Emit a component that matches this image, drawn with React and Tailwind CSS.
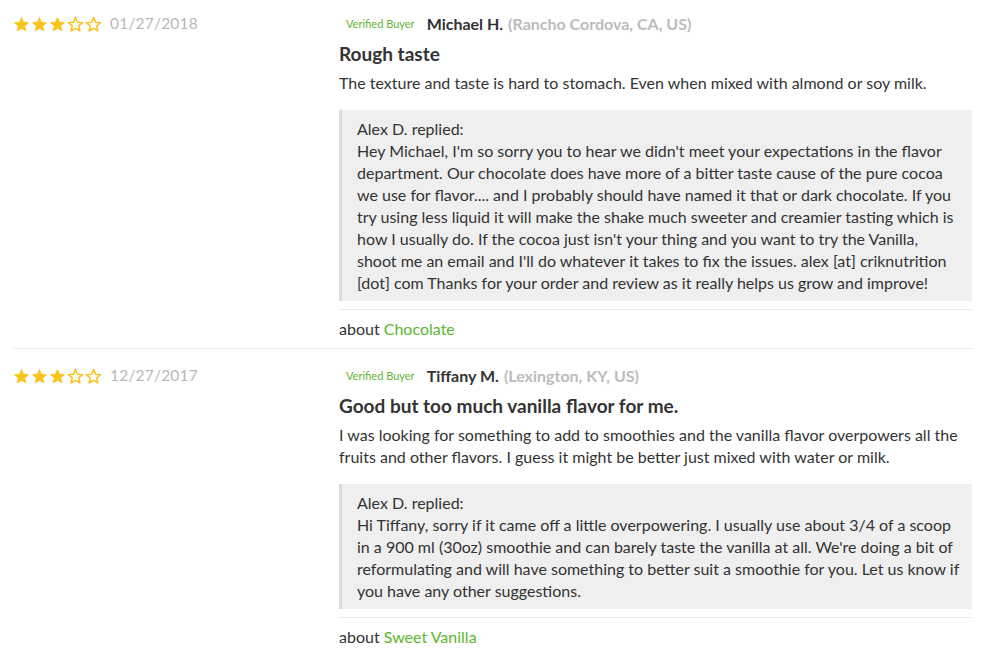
const reviews = [
  {
    rating: 3,
    date: '01/27/2018',
    name: 'Michael H.',
    location: '(Rancho Cordova, CA, US)',
    title: 'Rough taste',
    body: 'The texture and taste is hard to stomach. Even when mixed with almond or soy milk.',
    replier: 'Alex D.',
    reply:
      "Hey Michael, I'm so sorry you to hear we didn't meet your expectations in the flavor department. Our chocolate does have more of a bitter taste cause of the pure cocoa we use for flavor.... and I probably should have named it that or dark chocolate. If you try using less liquid it will make the shake much sweeter and creamier tasting which is how I usually do. If the cocoa just isn't your thing and you want to try the Vanilla, shoot me an email and I'll do whatever it takes to fix the issues. alex [at] criknutrition [dot] com Thanks for your order and review as it really helps us grow and improve!",
    product: 'Chocolate',
  },
  {
    rating: 3,
    date: '12/27/2017',
    name: 'Tiffany M.',
    location: '(Lexington, KY, US)',
    title: 'Good but too much vanilla flavor for me.',
    body: 'I was looking for something to add to smoothies and the vanilla flavor overpowers all the fruits and other flavors. I guess it might be better just mixed with water or milk.',
    replier: 'Alex D.',
    reply:
      "Hi Tiffany, sorry if it came off a little overpowering. I usually use about 3/4 of a scoop in a 900 ml (30oz) smoothie and can barely taste the vanilla at all. We're doing a bit of reformulating and will have something to better suit a smoothie for you. Let us know if you have any other suggestions.",
    product: 'Sweet Vanilla',
  },
]

const Star = ({ filled }) => (
  <svg width="17" height="17" viewBox="0 0 24 24" className="shrink-0">
    <path
      d="M12 2.2l2.9 6.6 7.1.6-5.4 4.7 1.6 7-6.2-3.7-6.2 3.7 1.6-7L2 9.4l7.1-.6z"
      fill={filled ? '#f9c418' : 'none'}
      stroke="#f9c418"
      strokeWidth={filled ? 1 : 2.2}
      strokeLinejoin="round"
    />
  </svg>
)

const Stars = ({ rating }) => (
  <div className="flex items-center gap-[1px]">
    {[1, 2, 3, 4, 5].map((i) => <Star key={i} filled={i <= rating} />)}
  </div>
)

const Review = ({ r, first }) => (
  <div className={`flex border-b border-[#e8e8e8] ${first ? 'pt-[14px]' : 'pt-[17px]'}`}>
    {/* Left: rating + date */}
    <div className="w-[326px] shrink-0">
      <div className="flex items-center gap-[8px] h-5">
        <Stars rating={r.rating} />
        <span className="text-[15.5px] text-[#b8b8b8] tracking-[0.2px]">{r.date}</span>
      </div>
    </div>

    {/* Right: content */}
    <div className="flex-1 min-w-0">
      <div className="flex items-center h-5 pl-[7px]">
        <span className="text-[11px] text-[#5cb531] mr-3">Verified Buyer</span>
        <span className="text-[16px] font-bold text-[#333]">{r.name}</span>
        <span className="text-[16px] font-bold text-[#bcbcbc] ml-[5px]">{r.location}</span>
      </div>
      <h3 className="mt-2 text-[19px] leading-6 font-bold text-[#333]">{r.title}</h3>
      <p className="mt-[6px] text-[16px] leading-[22px] text-[#333]">{r.body}</p>

      {/* Reply */}
      <div className="mt-4 bg-[#efefef] border-l-[3px] border-[#dcdcdc] pl-[15px] pr-3 pt-2 pb-[7px] text-[16px] leading-[22px] text-[#333]">
        <p>{r.replier} replied:</p>
        <p>{r.reply}</p>
      </div>

      <div className="mt-2 border-t border-[#e8e8e8] pt-[8px] pb-[8px] text-[16px] leading-[22px] text-[#333]">
        about <span className="text-[#5cb531]">{r.product}</span>
      </div>
    </div>
  </div>
)

export default function App() {
  return (
    <div className="bg-white min-h-screen pl-[13px] pr-[25px]" style={{ fontFamily: 'Lato, "Noto Sans", sans-serif' }}>
      {reviews.map((r, i) => <Review key={i} r={r} first={i === 0} />)}
    </div>
  )
}
